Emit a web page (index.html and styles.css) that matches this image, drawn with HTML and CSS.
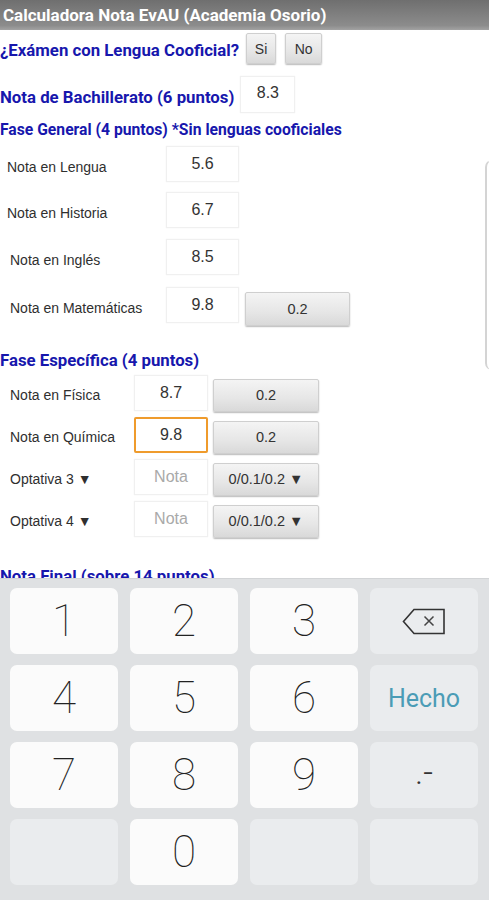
FILE: index.html
```html
<!DOCTYPE html>
<html lang="es">
<head>
<meta charset="utf-8">
<title>Calculadora Nota EvAU</title>
<link rel="stylesheet" href="styles.css">
</head>
<body>
<div class="app">
  <header class="titlebar">Calculadora Nota EvAU (Academia Osorio)</header>
  <main class="content">
    <div class="scroll-edge"></div>
    <div class="row q-row">
      <span class="heading">¿Exámen con Lengua Cooficial?</span>
      <button class="btn btn-yes">Si</button>
      <button class="btn btn-no">No</button>
    </div>
    <div class="row bach-row">
      <span class="heading">Nota de Bachillerato (6 puntos)</span>
      <div class="field field-bach">8.3</div>
    </div>
    <h2 class="heading section sec-general">Fase General (4 puntos) *Sin lenguas cooficiales</h2>
    <div class="row grow r-lengua">
      <span class="label lab-g lab-near">Nota en Lengua</span>
      <div class="field field-g">5.6</div>
    </div>
    <div class="row grow r-historia">
      <span class="label lab-g lab-near">Nota en Historia</span>
      <div class="field field-g">6.7</div>
    </div>
    <div class="row grow r-ingles">
      <span class="label lab-g">Nota en Inglés</span>
      <div class="field field-g">8.5</div>
    </div>
    <div class="row grow r-mate">
      <span class="label lab-g">Nota en Matemáticas</span>
      <div class="field field-g">9.8</div>
      <button class="btn btn-wide btn-g">0.2</button>
    </div>
    <h2 class="heading section sec-esp">Fase Específica (4 puntos)</h2>
    <div class="row srow r-fisica">
      <span class="label lab-s">Nota en Física</span>
      <div class="field field-s">8.7</div>
      <button class="btn btn-wide btn-s">0.2</button>
    </div>
    <div class="row srow r-quimica">
      <span class="label lab-s">Nota en Química</span>
      <div class="field field-s field-focus">9.8</div>
      <button class="btn btn-wide btn-s">0.2</button>
    </div>
    <div class="row srow r-opt">
      <span class="label lab-s">Optativa 3 ▼</span>
      <div class="field field-s placeholder">Nota</div>
      <button class="btn btn-wide btn-s">0/0.1/0.2 ▼</button>
    </div>
    <div class="row srow r-opt">
      <span class="label lab-s">Optativa 4 ▼</span>
      <div class="field field-s placeholder">Nota</div>
      <button class="btn btn-wide btn-s">0/0.1/0.2 ▼</button>
    </div>
    <h2 class="heading section sec-final">Nota Final (sobre 14 puntos)</h2>
  </main>
  <div class="keyboard">
    <div class="key digit">1</div>
    <div class="key digit">2</div>
    <div class="key digit">3</div>
    <div class="key fn">
      <svg class="bksp" width="44" height="27" viewBox="0 0 44 27">
        <path d="M12 1.5 H42 V25.5 H12 L1.5 13.5 Z" fill="none" stroke="#333" stroke-width="1.6" stroke-linejoin="miter"/>
        <path d="M22.5 8.5 L31.5 17.5 M31.5 8.5 L22.5 17.5" stroke="#444" stroke-width="1.5" fill="none"/>
      </svg>
    </div>
    <div class="key digit">4</div>
    <div class="key digit">5</div>
    <div class="key digit">6</div>
    <div class="key fn hecho">Hecho</div>
    <div class="key digit">7</div>
    <div class="key digit">8</div>
    <div class="key digit">9</div>
    <div class="key fn dotdash">.-</div>
    <div class="key fn"></div>
    <div class="key digit">0</div>
    <div class="key fn"></div>
    <div class="key fn"></div>
  </div>
</div>
</body>
</html>
```

FILE: styles.css
```css
* { box-sizing: border-box; }
html, body { margin: 0; padding: 0; background: #fff; }
body { font-family: "Liberation Sans", Arial, sans-serif; }

.app {
  width: 489px;
  height: 900px;
  display: flex;
  flex-direction: column;
  overflow: hidden;
}

.titlebar {
  height: 30px;
  flex: none;
  background: linear-gradient(#6f6f6f, #8c8c8c 85%, #a2a2a2);
  color: #fff;
  font-family: Roboto, "Liberation Sans", sans-serif;
  font-weight: 700;
  font-size: 17px;
  line-height: 30px;
  padding-left: 3px;
  white-space: nowrap;
}

.content {
  flex: 1;
  position: relative;
  overflow: hidden;
  display: flex;
  flex-direction: column;
}

.scroll-edge {
  position: absolute;
  left: 485px;
  top: 130px;
  width: 12px;
  height: 210px;
  border-left: 2px solid #d4d4d4;
  border-top: 1px solid #e4e4e4;
  border-radius: 7px 0 0 7px;
}

.row { display: flex; align-items: center; flex: none; }

.heading {
  font-family: Roboto, "Liberation Sans", sans-serif;
  font-weight: 700;
  font-size: 16.8px;
  color: #1717ad;
  margin: 0;
  white-space: nowrap;
}

.section { line-height: 20px; height: 20px; flex: none; }

.q-row { margin-top: 3px; height: 31px; }
.q-row .heading { margin-right: 7px; padding-top: 2px; }

.btn {
  font-family: "Liberation Sans", Arial, sans-serif;
  color: #333;
  background: linear-gradient(#f4f4f4, #e6e6e6 60%, #d9d9d9);
  border: 1px solid #cfcfcf;
  border-radius: 2px;
  box-shadow: 0 1px 1.5px rgba(0,0,0,0.28);
  padding: 0;
  margin: 0;
}
.btn-yes { width: 30px; height: 31px; font-size: 14px; margin-right: 9px; }
.btn-no { width: 37px; height: 31px; font-size: 14px; }

.bach-row { margin-top: 12px; height: 37px; }
.bach-row .heading { margin-right: 6px; padding-top: 4px; }

.field {
  background: #fff;
  border: 1px solid #f0f0f0;
  box-shadow: 0 0 1px rgba(0,0,0,0.08);
  color: #333;
  font-size: 16px;
  display: flex;
  align-items: center;
  justify-content: center;
}
.field-bach { width: 55px; height: 37px; align-items: flex-start; padding-top: 7px; }

.sec-general { margin-top: 7px; font-size: 15.7px; }

.grow { height: 36px; }
.r-lengua { margin-top: 6px; }
.r-historia { margin-top: 10px; }
.r-ingles { margin-top: 11px; }
.r-mate { margin-top: 12px; }

.label {
  font-size: 14px;
  color: #2f2f2f;
  white-space: nowrap;
}
.lab-g { width: 166px; padding-left: 10px; padding-top: 6px; }
.lab-g.lab-near { padding-left: 7px; }
.field-g { width: 73px; height: 36px; }
.btn-wide { font-size: 14.5px; }
.btn-g { width: 105px; height: 34px; margin-left: 6px; margin-top: 8px; }

.sec-esp { margin-top: 27px; }

.srow { height: 36px; margin-top: 6px; }
.r-fisica { margin-top: 5px; }
.lab-s { width: 134px; padding-left: 10px; padding-top: 4px; }
.field-s { width: 74px; height: 36px; }
.field-focus { border: 2px solid #ef9b2c; border-radius: 2px; }
.placeholder { color: #a9a9a9; }
.btn-s { width: 106px; height: 33px; margin-left: 5px; margin-top: 4px; }

.sec-final { margin-top: 29px; }

.keyboard {
  flex: none;
  height: 322px;
  background: #dfe1e3;
  border-top: 1px solid #d2d4d6;
  padding: 9px 11px 0 10px;
  display: grid;
  grid-template-columns: repeat(4, 108px);
  grid-template-rows: repeat(4, 66px);
  column-gap: 12px;
  row-gap: 11px;
}

.key {
  border-radius: 7px;
  display: flex;
  align-items: center;
  justify-content: center;
  font-family: Roboto, "Liberation Sans", sans-serif;
  font-weight: 100;
  font-size: 44px;
  color: #222;
}
.digit { background: #fbfbfb; }
.fn { background: #eaecee; }
.hecho { font-size: 25px; font-weight: 400; color: #4b9cb6; }
.dotdash { font-size: 34px; font-weight: 300; color: #333; padding-bottom: 6px; }
.bksp { display: block; }
```
